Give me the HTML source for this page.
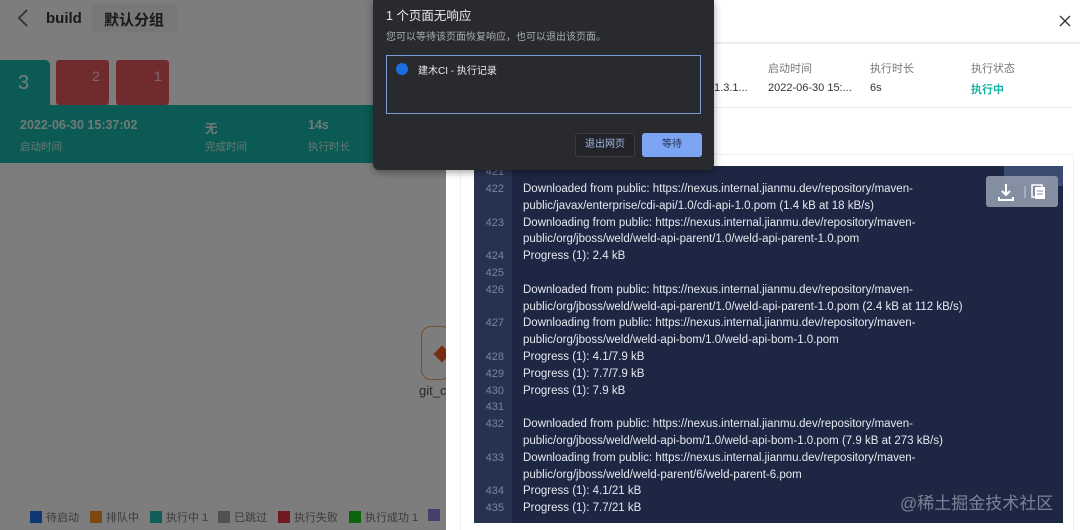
<!DOCTYPE html>
<html style="background:#7f7f7f"><head><meta charset="utf-8"><style>
*{margin:0;padding:0;box-sizing:border-box}
body{width:1080px;height:530px;overflow:hidden;background:#7f7f7f;font-family:"Liberation Sans","Noto Sans CJK SC",sans-serif;position:relative}
.a{position:absolute}
.log{font-size:11.5px;color:#e6e8ee;line-height:16.8px}
.ln{position:absolute;left:474px;width:38px;text-align:right;padding-right:8px;color:#7d8499;font-size:11px;line-height:16.8px}
.lg{display:flex;align-items:center;font-size:11px;color:#777}
.lg span.s{width:12px;height:12px;display:inline-block;margin-right:4px}
</style></head><body>
<div class="a" style="left:0;top:0;width:1080px;height:530px;background:#fafafa"></div>
<!-- left -->
<svg class="a" style="left:16px;top:9px" width="14" height="18"><path d="M11 1L3 9l8 8" stroke="#666" stroke-width="1.8" fill="none"/></svg>
<div class="a" style="left:46px;top:10px;font-size:15px;font-weight:bold;color:#333">build</div>
<div class="a" style="left:92px;top:4px;width:86px;height:28px;background:#f0f0f4;border-radius:3px"></div>
<div class="a" style="left:104px;top:9px;font-size:15px;font-weight:bold;color:#333">默认分组</div>
<div class="a" style="left:0;top:60px;width:50px;height:50px;background:#17b5a6;border-radius:0 5px 0 0"></div>
<div class="a" style="left:18px;top:72px;font-size:20px;color:#e8fbf8">3</div>
<div class="a" style="left:56px;top:60px;width:53px;height:45px;background:#e0575c;border-radius:3px"></div>
<div class="a" style="left:92px;top:68px;font-size:14px;color:#f6d0d1">2</div>
<div class="a" style="left:116px;top:60px;width:53px;height:45px;background:#e0575c;border-radius:3px"></div>
<div class="a" style="left:154px;top:68px;font-size:14px;color:#f6d0d1">1</div>
<div class="a" style="left:0;top:105px;width:380px;height:58px;background:#17b5a6"></div>
<div class="a" style="left:20px;top:118px;font-size:12.5px;color:#e0f5f2;font-weight:bold">2022-06-30 15:37:02</div>
<div class="a" style="left:20px;top:139px;font-size:10.5px;color:#d0efea">启动时间</div>
<div class="a" style="left:205px;top:118px;font-size:12.5px;color:#e0f5f2;font-weight:bold">无</div>
<div class="a" style="left:205px;top:139px;font-size:10.5px;color:#d0efea">完成时间</div>
<div class="a" style="left:308px;top:118px;font-size:12.5px;color:#e0f5f2;font-weight:bold">14s</div>
<div class="a" style="left:308px;top:139px;font-size:10.5px;color:#d0efea">执行时长</div>
<div class="a" style="left:421px;top:326px;width:30px;height:54px;border:1px solid #e8a060;border-radius:10px"></div>
<div class="a" style="left:436px;top:348px;width:12px;height:12px;background:#f05a22;transform:rotate(45deg)"></div>
<div class="a" style="left:419px;top:383px;font-size:13px;color:#555">git_c</div>
<div class="a lg" style="left:30px;top:509px"><span class="s" style="background:#1f6fe8"></span>待启动</div>
<div class="a lg" style="left:90px;top:509px"><span class="s" style="background:#f59020"></span>排队中</div>
<div class="a lg" style="left:150px;top:509px"><span class="s" style="background:#1fbcae"></span>执行中 1</div>
<div class="a lg" style="left:218px;top:509px"><span class="s" style="background:#a0a0a0"></span>已跳过</div>
<div class="a lg" style="left:278px;top:509px"><span class="s" style="background:#e63040"></span>执行失败</div>
<div class="a lg" style="left:349px;top:509px"><span class="s" style="background:#18c818"></span>执行成功 1</div>
<div class="a lg" style="left:428px;top:509px"><span class="s" style="background:#8a80d8"></span></div>
<div class="a" style="left:0;top:0;width:446px;height:530px;background:rgba(0,0,0,0.5)"></div>
<!-- right panel -->
<div class="a" style="left:446px;top:0;width:634px;height:530px;background:#fff"></div>
<svg class="a" style="left:1059px;top:15px" width="12" height="12"><path d="M1 1l10 10M11 1L1 11" stroke="#333" stroke-width="1.3"/></svg>
<div class="a" style="left:700px;top:42px;width:380px;height:2px;background:#eceef6"></div>
<div class="a" style="left:768px;top:60px;font-size:11px;color:#777">启动时间</div>
<div class="a" style="left:870px;top:60px;font-size:11px;color:#777">执行时长</div>
<div class="a" style="left:971px;top:60px;font-size:11px;color:#777">执行状态</div>
<div class="a" style="left:700px;top:82px;font-size:11px;color:#333">ild:1.3.1...</div>
<div class="a" style="left:768px;top:82px;font-size:11px;color:#333">2022-06-30 15:...</div>
<div class="a" style="left:870px;top:82px;font-size:11px;color:#333">6s</div>
<div class="a" style="left:971px;top:81px;font-size:11px;color:#16b4a6;font-weight:bold">执行中</div>
<div class="a" style="left:700px;top:107px;width:372px;height:1px;background:#ececec"></div>
<div class="a" style="left:460px;top:154px;width:614px;height:376px;border:1px solid #eef0f4;border-bottom:none"></div>
<div class="a" style="left:474px;top:166px;width:589px;height:357px;background:#1d2744"></div>
<div class="a" style="left:474px;top:166px;width:38px;height:357px;background:#273253"></div>
<div class="a" style="left:1004px;top:166px;width:59px;height:20px;background:#3b4a70"></div>
<div class="a" style="left:986px;top:176px;width:72px;height:31px;background:#8a93a6;border-radius:3px;opacity:.95"></div>
<svg class="a" style="left:996px;top:182px" width="60" height="20"><path d="M10 2v11M6 9l4 4 4-4M3 15v3h14v-3" stroke="#fff" stroke-width="2" fill="none"/><line x1="29" y1="4" x2="29" y2="16" stroke="#ccd" stroke-width="1"/><rect x="39" y="5" width="10" height="12" fill="#fff"/><rect x="36" y="3" width="10" height="12" fill="none" stroke="#fff" stroke-width="1.5"/><path d="M41 9h6M41 12h6" stroke="#8a93a6"/></svg>
<div class="ln" style="top:164px">421</div>
<div class="ln" style="top:181px">422<br><br>423<br><br>424<br>425<br>426<br><br>427<br><br>428<br>429<br>430<br>431<br>432<br><br>433<br><br>434<br>435</div>
<div class="a log" style="left:523px;top:181px">Downloaded from public: https://nexus.internal.jianmu.dev/repository/maven-<br>public/javax/enterprise/cdi-api/1.0/cdi-api-1.0.pom (1.4 kB at 18 kB/s)<br>Downloading from public: https://nexus.internal.jianmu.dev/repository/maven-<br>public/org/jboss/weld/weld-api-parent/1.0/weld-api-parent-1.0.pom<br>Progress (1): 2.4 kB<br><br>Downloaded from public: https://nexus.internal.jianmu.dev/repository/maven-<br>public/org/jboss/weld/weld-api-parent/1.0/weld-api-parent-1.0.pom (2.4 kB at 112 kB/s)<br>Downloading from public: https://nexus.internal.jianmu.dev/repository/maven-<br>public/org/jboss/weld/weld-api-bom/1.0/weld-api-bom-1.0.pom<br>Progress (1): 4.1/7.9 kB<br>Progress (1): 7.7/7.9 kB<br>Progress (1): 7.9 kB<br><br>Downloaded from public: https://nexus.internal.jianmu.dev/repository/maven-<br>public/org/jboss/weld/weld-api-bom/1.0/weld-api-bom-1.0.pom (7.9 kB at 273 kB/s)<br>Downloading from public: https://nexus.internal.jianmu.dev/repository/maven-<br>public/org/jboss/weld/weld-parent/6/weld-parent-6.pom<br>Progress (1): 4.1/21 kB<br>Progress (1): 7.7/21 kB</div>
<div class="a" style="left:900px;top:489px;font-size:17px;color:rgba(200,205,215,.55)">@稀土掘金技术社区</div>
<!-- dialog -->
<div class="a" style="left:373px;top:0;width:341px;height:170px;background:#292a2d;border-radius:0 0 6px 6px;box-shadow:0 2px 8px rgba(0,0,0,.4)"></div>
<div class="a" style="left:386px;top:5px;font-size:12.5px;color:#e8eaed">1 个页面无响应</div>
<div class="a" style="left:386px;top:28px;font-size:10px;color:#a9acb1">您可以等待该页面恢复响应，也可以退出该页面。</div>
<div class="a" style="left:386px;top:55px;width:315px;height:59px;border:1px solid #7b9cd8"></div>
<div class="a" style="left:396px;top:63px;width:12px;height:12px;border-radius:50%;background:#1a6fe0"></div>
<div class="a" style="left:418px;top:62px;font-size:10px;color:#e8eaed">建木CI - 执行记录</div>
<div class="a" style="left:575px;top:133px;width:60px;height:24px;border:1px solid #3c3d40;border-radius:3px;background:#232427;font-size:10px;color:#9fb7e6;text-align:center;line-height:22px">退出网页</div>
<div class="a" style="left:642px;top:133px;width:60px;height:24px;border-radius:3px;background:#7ea5f4;font-size:10px;color:#203050;text-align:center;line-height:24px">等待</div>
</body></html>
